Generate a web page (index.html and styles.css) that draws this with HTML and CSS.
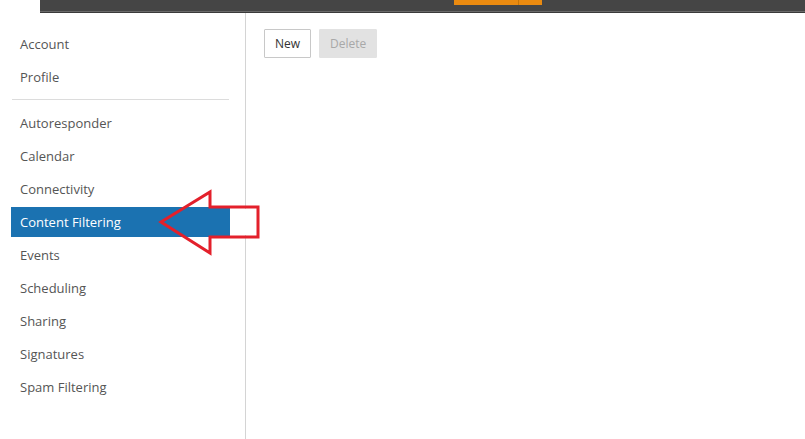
FILE: index.html
```html
<!DOCTYPE html>
<html>
<head>
<meta charset="utf-8">
<link rel="stylesheet" href="styles.css">
</head>
<body>
<div class="header">
  <div class="header-tab"><span class="tab-a"></span><span class="tab-b"></span></div>
</div>
<div class="main">
  <nav class="sidebar">
    <div class="item">Account</div>
    <div class="item">Profile</div>
    <div class="sep"></div>
    <div class="item">Autoresponder</div>
    <div class="item">Calendar</div>
    <div class="item">Connectivity</div>
    <div class="item active">Content Filtering</div>
    <div class="item">Events</div>
    <div class="item">Scheduling</div>
    <div class="item">Sharing</div>
    <div class="item">Signatures</div>
    <div class="item">Spam Filtering</div>
  </nav>
  <section class="content">
    <div class="toolbar">
      <button class="btn">New</button>
      <button class="btn disabled">Delete</button>
    </div>
  </section>
</div>
<svg class="arrow" width="805" height="439" viewBox="0 0 805 439">
  <rect x="231" y="209" width="25" height="26" fill="#fff"/>
  <polygon points="161,222 210,192 210,207 258,207 258,237 210,237 210,253" fill="none" stroke="#e3202b" stroke-width="3" stroke-linejoin="miter"/>
</svg>
</body>
</html>
```
FILE: styles.css
```css
html, body {
  margin: 0;
  padding: 0;
  background: #fff;
  height: 100%;
  overflow: hidden;
}
body {
  font-family: "Open Sans", "Noto Sans", sans-serif;
  position: relative;
}
.header {
  margin-left: 40px;
  height: 11px;
  background: #454545;
  border-bottom: 1px solid #6a6a6a;
  box-shadow: 0 1px 0 #3a3a3a;
  display: flex;
}
.header-tab {
  margin-left: 414px;
  display: flex;
  height: 5px;
}
.tab-a {
  width: 64px;
  background: #ea8a10;
  border-right: 1px solid #c77508;
}
.tab-b {
  width: 23px;
  background: #ea8a10;
}
.main {
  display: flex;
  margin-top: 1px;
  height: calc(100% - 13px);
}
.sidebar {
  width: 246px;
  box-sizing: border-box;
  border-right: 1px solid #d4d4d4;
  padding: 16px 15px 0 11px;
  flex-shrink: 0;
}
.item {
  height: 30px;
  line-height: 30px;
  margin-bottom: 3px;
  padding-left: 9px;
  font-size: 13px;
  color: #555;
  width: 219px;
  box-sizing: border-box;
}
.item.active {
  background: #1b72b1;
  color: #fff;
}
.sep {
  height: 1px;
  background: #dcdcdc;
  margin: 7px 0 8px 1px;
  width: 217px;
}
.content {
  flex: 1;
  padding: 16px 18px;
}
.toolbar {
  display: flex;
  gap: 8px;
}
.btn {
  font-family: "Open Sans", "Noto Sans", sans-serif;
  font-size: 12px;
  height: 29px;
  padding: 0 10px;
  background: #fff;
  border: 1px solid #c8c8c8;
  color: #333;
  border-radius: 1px;
}
.btn.disabled {
  background: #e2e2e2;
  border-color: #e2e2e2;
  color: #a8a8a8;
}
.arrow {
  position: absolute;
  left: 0;
  top: 0;
  pointer-events: none;
}
```
